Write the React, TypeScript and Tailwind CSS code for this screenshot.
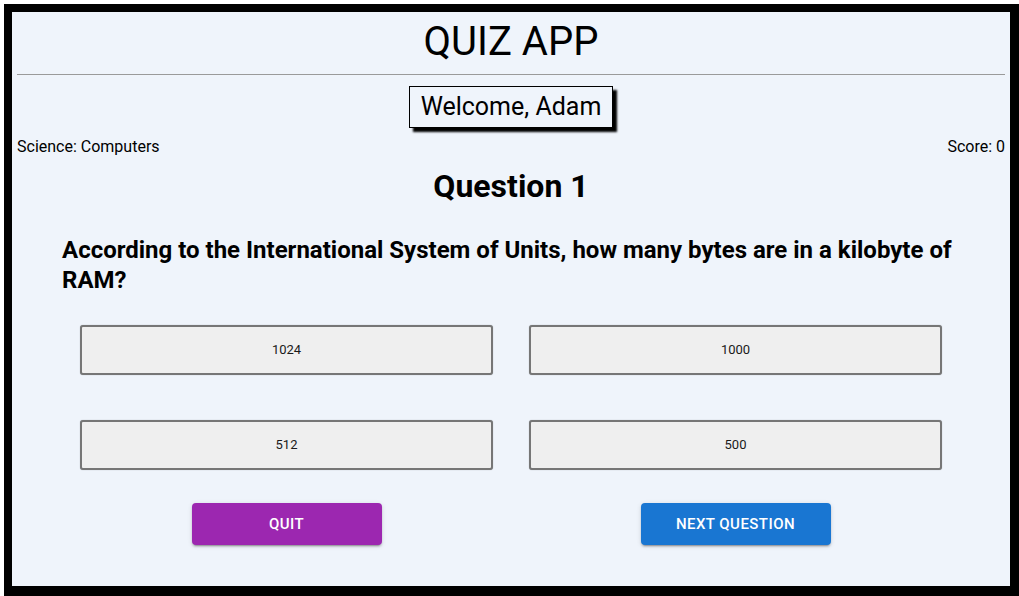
import React from "react";

const answers = ["1024", "1000", "512", "500"];

const muiShadow =
  "shadow-[0px_3px_1px_-2px_rgba(0,0,0,0.2),0px_2px_2px_0px_rgba(0,0,0,0.14),0px_1px_5px_0px_rgba(0,0,0,0.12)]";

export default function App() {
  return (
    <div className="bg-white pl-1 pt-1 font-['Roboto',sans-serif]">
      <div className="box-border h-[592px] w-[1015px] border-8 border-r-[9px] border-b-[10px] border-black bg-[#eff4fb] text-black">
        <div className="px-[5px]">
          <h1 className="mt-[6px] text-center text-[40px] leading-[47px] font-normal">QUIZ APP</h1>
          <hr className="mt-[9px] border-0 border-t border-[#9a9a9a]" />

          <div className="mt-[11px] flex justify-center">
            <div className="border border-black bg-[#eff4fb] px-[11px] py-[6px] text-[25px] leading-[28px] shadow-[4px_4px_2px_#000]">
              Welcome, Adam
            </div>
          </div>

          <div className="mt-[7px] flex justify-between text-[16px] leading-6">
            <span>Science: Computers</span>
            <span>Score: 0</span>
          </div>

          <h2 className="mt-[8px] text-center text-[32px] leading-[38px] font-bold">Question 1</h2>

          <p className="mt-[30px] pl-[45px] pr-[20px] text-[24px] leading-[30px] font-bold">
            According to the International System of Units, how many bytes are in a kilobyte of RAM?
          </p>

          <div className="mx-auto mt-[30px] grid w-[862px] grid-cols-2 gap-x-9 gap-y-[45px]">
            {answers.map((a) => (
              <button
                key={a}
                className="flex h-[50px] items-center justify-center rounded-[3px] border-2 border-[#767676] bg-[#efefef] text-[13px] text-[#1a1a1a] shadow-[0_0_1px_rgba(0,0,0,0.35)]"
              >
                {a}
              </button>
            ))}
          </div>

          <div className="mx-auto mt-[33px] grid w-[862px] grid-cols-2 gap-x-9">
            <div className="flex justify-center">
              <button
                className={`h-[42px] w-[190px] rounded bg-[#9c27b0] text-[15px] font-medium uppercase tracking-[0.46px] text-white ${muiShadow}`}
              >
                Quit
              </button>
            </div>
            <div className="flex justify-center">
              <button
                className={`h-[42px] w-[190px] rounded bg-[#1976d2] text-[15px] font-medium uppercase tracking-[0.46px] text-white ${muiShadow}`}
              >
                Next Question
              </button>
            </div>
          </div>
        </div>
      </div>
    </div>
  );
}
